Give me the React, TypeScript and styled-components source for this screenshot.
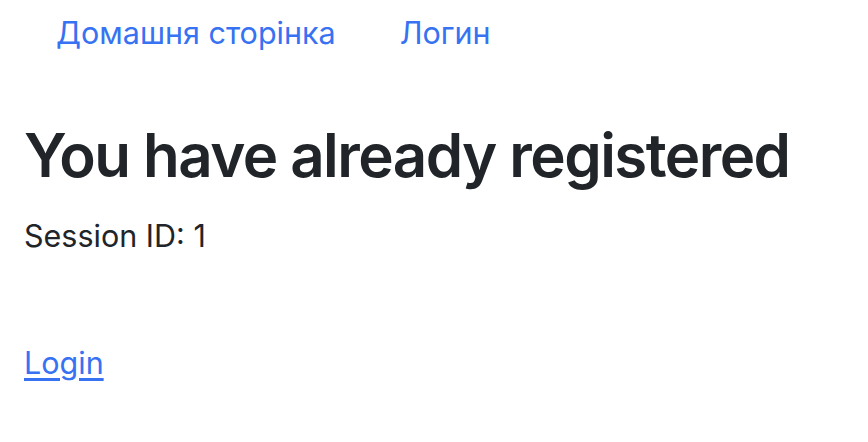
import React from "react";
import styled, { createGlobalStyle } from "styled-components";

const Global = createGlobalStyle`
  html, body { margin: 0; padding: 0; background: #fff; }
  body { font-family: Inter, "Noto Sans", sans-serif; color: #212529; }
`;

const Page = styled.div`
  display: flex;
  flex-direction: column;
  padding: 0 24px;
`;

const Nav = styled.nav`
  display: flex;
  padding-top: 13px;
`;

const NavLink = styled.a`
  color: #3672f2;
  text-decoration: none;
  font-size: 30.5px;
  line-height: 40px;
  padding: 0 32px;
`;

const Heading = styled.h1`
  margin: 66px 0 0;
  font-size: 60px;
  font-weight: 600;
  line-height: 72px;
  letter-spacing: -1.55px;
`;

const Text = styled.p`
  margin: 25px 0 0;
  font-size: 30.5px;
  line-height: 40px;
`;

const LoginLink = styled.a`
  margin-top: 87px;
  align-self: flex-start;
  color: #3672f2;
  font-size: 30.5px;
  line-height: 40px;
  text-decoration: underline;
  text-underline-offset: 4px;
`;

export default function App() {
  return (
    <>
      <Global />
      <Page>
        <Nav>
          <NavLink href="#">Домашня сторінка</NavLink>
          <NavLink href="#">Логин</NavLink>
        </Nav>
        <Heading>You have already registered</Heading>
        <Text>Session ID: 1</Text>
        <LoginLink href="#">Login</LoginLink>
      </Page>
    </>
  );
}
